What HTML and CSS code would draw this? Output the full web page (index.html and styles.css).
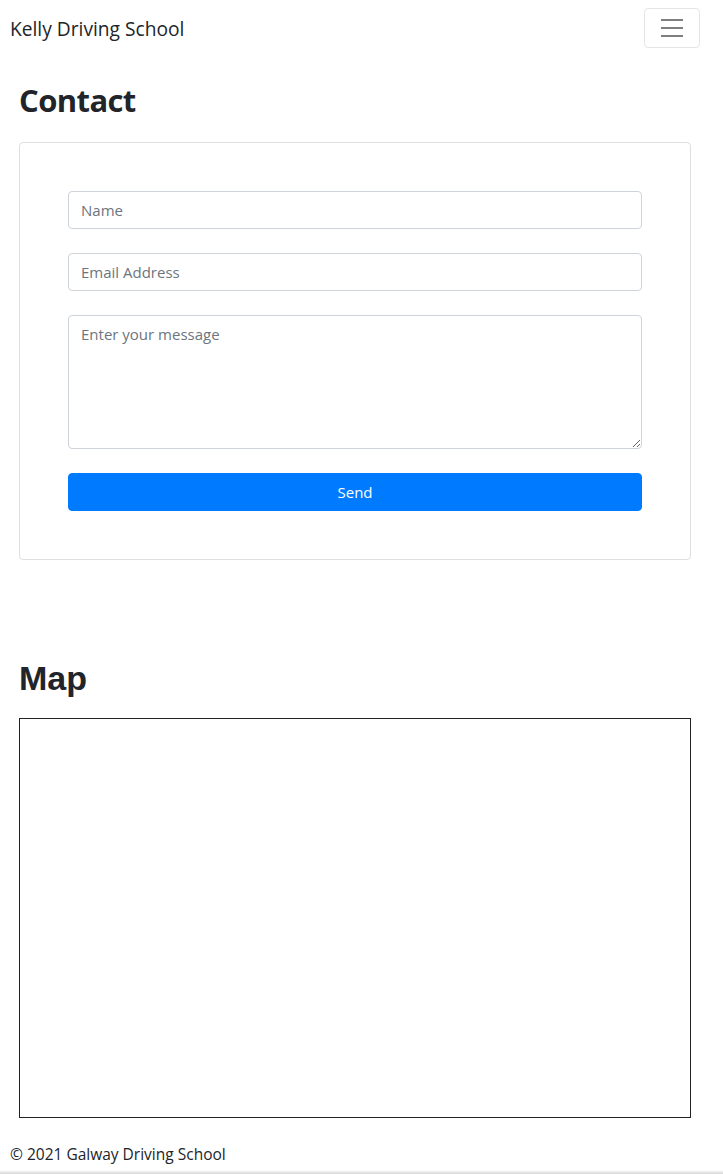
FILE: index.html
```html
<!DOCTYPE html>
<html lang="en">
<head>
<meta charset="utf-8">
<title>Contact - Kelly Driving School</title>
<link rel="stylesheet" href="styles.css">
</head>
<body>
<nav class="navbar">
  <a class="brand" href="#">Kelly Driving School</a>
  <button class="toggler" type="button" aria-label="Toggle navigation">
    <svg width="30" height="30" viewBox="0 0 30 30"><path stroke="rgba(0,0,0,0.5)" stroke-linecap="butt" stroke-width="2" d="M4 7h22M4 15h22M4 23h22"/></svg>
  </button>
</nav>
<main class="container">
  <h1 class="title">Contact</h1>
  <div class="card">
    <form class="form">
      <input class="field" type="text" placeholder="Name">
      <input class="field" type="email" placeholder="Email Address">
      <textarea class="field area" placeholder="Enter your message"></textarea>
      <button class="send" type="button">Send</button>
    </form>
  </div>
  <h1 class="title map-title">Map</h1>
  <div class="map"></div>
</main>
<footer class="footer">© 2021 Galway Driving School</footer>
</body>
</html>
```
FILE: styles.css
```css
* { box-sizing: border-box; }
html, body { margin: 0; padding: 0; }
body {
  font-family: "Open Sans", "Noto Sans", sans-serif;
  font-size: 15px;
  color: #212529;
  background: #fff;
  width: 723px;
  height: 1174px;
  overflow: hidden;
  position: relative;
}
.navbar {
  display: flex;
  align-items: center;
  justify-content: space-between;
  height: 56px;
  padding: 0 23px 0 10px;
}
.brand {
  font-size: 19.2px;
  color: #212529;
  text-decoration: none;
}
.toggler {
  width: 56px;
  height: 40px;
  display: flex;
  align-items: center;
  justify-content: center;
  background: transparent;
  border: 1px solid rgba(0,0,0,0.1);
  border-radius: 4px;
  padding: 0;
}
.container {
  padding: 0 32px 0 19px;
}
.title {
  font-family: "Open Sans", sans-serif;
  font-weight: 700;
  font-size: 31px;
  line-height: 40px;
  margin: 24px 0 0;
  letter-spacing: -0.6px;
}
.card {
  margin-top: 22px;
  border: 1px solid rgba(0,0,0,0.125);
  border-radius: 4px;
  padding: 48px;
}
.form {
  display: flex;
  flex-direction: column;
  gap: 24px;
}
.field {
  display: block;
  width: 100%;
  height: 38px;
  padding: 6px 12px;
  font-family: inherit;
  font-size: 15px;
  line-height: 24px;
  color: #495057;
  border: 1px solid #ced4da;
  border-radius: 4px;
  background: #fff;
}
.field::placeholder { color: #6c757d; opacity: 1; }
.area {
  height: 134px;
  resize: vertical;
}
.send {
  height: 38px;
  width: 100%;
  background: #007bff;
  color: #fff;
  border: 1px solid #007bff;
  border-radius: 4px;
  font-family: inherit;
  font-size: 15px;
}
.map-title {
  font-family: "Liberation Sans", Arial, sans-serif;
  font-size: 34px;
  margin-top: 98px;
  letter-spacing: 0;
}
.map {
  margin-top: 20px;
  height: 400px;
  border: 1px solid #222;
}
.footer {
  padding: 25px 10px 0;
  font-size: 15.5px;
  line-height: 22px;
}
body::after {
  content: "";
  position: absolute;
  left: 0;
  right: 0;
  bottom: 0;
  height: 4px;
  background: linear-gradient(#fff, #d6d6d6);
}
```
